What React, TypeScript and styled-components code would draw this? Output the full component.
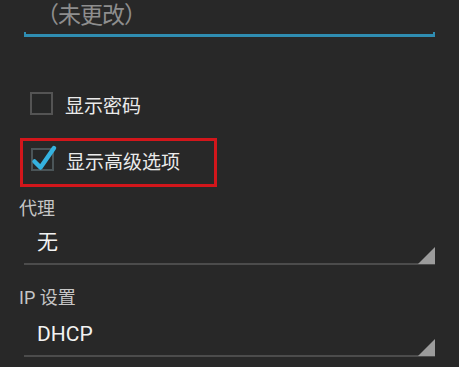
import React from "react";
import styled, { createGlobalStyle } from "styled-components";

const GlobalStyle = createGlobalStyle`
  html, body {
    margin: 0;
    padding: 0;
    background: #282828;
  }
  body {
    width: 459px;
    height: 367px;
    overflow: hidden;
    font-family: Roboto, "Noto Sans CJK SC", sans-serif;
  }
`;

function Checkbox({ checked }: { checked?: boolean }) {
  return (
    <CheckIcon width="24" height="24" viewBox="0 0 24 24">
      <rect
        x="1"
        y="1"
        width="21"
        height="21"
        fill="#262727"
        stroke={checked ? "#4b5558" : "#545454"}
        strokeWidth="2"
      />
      {checked && (
        <path
          d="M3.5 13.5 L9.5 19.5 L23 0"
          fill="none"
          stroke="#35b2df"
          strokeWidth="4.5"
          strokeLinecap="round"
          strokeLinejoin="round"
        />
      )}
    </CheckIcon>
  );
}

function Spinner({ value, offset }: { value: string; offset: number }) {
  return (
    <SpinnerBox>
      <SpinnerValue $offset={offset}>{value}</SpinnerValue>
      <Corner width="17" height="17" viewBox="0 0 17 17">
        <polygon points="0,17 17,17 17,0" fill="#9c9c9c" />
      </Corner>
    </SpinnerBox>
  );
}

export default function App() {
  return (
    <Page>
      <GlobalStyle />
      <EditField>
        <Hint>（未更改）</Hint>
        <Bracket />
      </EditField>

      <CheckRow $top={43}>
        <Checkbox />
        <CheckLabel>显示密码</CheckLabel>
      </CheckRow>

      <Highlight>
        <CheckRow $top={0} $inner>
          <Checkbox checked />
          <CheckLabel>显示高级选项</CheckLabel>
        </CheckRow>
      </Highlight>

      <FieldLabel $top={10}>代理</FieldLabel>
      <Spinner value="无" offset={0} />

      <FieldLabel $top={21}>IP 设置</FieldLabel>
      <Spinner value="DHCP" offset={3} />
    </Page>
  );
}

const Page = styled.div`
  display: flex;
  flex-direction: column;
  width: 459px;
  height: 367px;
`;

const EditField = styled.div`
  display: flex;
  flex-direction: column;
  margin: 0 24px;
`;

const Hint = styled.div`
  height: 32px;
  line-height: 32px;
  padding-left: 12px;
  font-size: 23px;
  color: #8e8e8e;
  letter-spacing: -1px;
`;

const Bracket = styled.div`
  height: 2px;
  border: 2px solid #2f8db2;
  border-top: none;
  border-bottom-width: 3px;
`;

const CheckRow = styled.div<{ $top: number; $inner?: boolean }>`
  display: flex;
  align-items: center;
  gap: 11px;
  height: ${(p) => (p.$inner ? 38 : 48)}px;
  margin-top: ${(p) => p.$top}px;
  padding-left: ${(p) => (p.$inner ? 8 : 30)}px;
  padding-bottom: ${(p) => (p.$inner ? 5 : 0)}px;
`;

const CheckIcon = styled.svg`
  flex-shrink: 0;
  overflow: visible;
`;

const CheckLabel = styled.span`
  font-size: 19px;
  color: #ebebeb;
`;

const Highlight = styled.div`
  width: 191px;
  margin: 10px 0 0 20px;
  border: 3px solid #d2161b;
`;

const FieldLabel = styled.div<{ $top: number }>`
  margin-top: ${(p) => p.$top}px;
  padding-left: 19px;
  height: 24px;
  line-height: 24px;
  font-size: 18px;
  color: #c6c6c6;
`;

const SpinnerBox = styled.div`
  display: flex;
  align-items: flex-end;
  margin: 0 24px;
  border-bottom: 2px solid #4c4c4c;
`;

const SpinnerValue = styled.div<{ $offset: number }>`
  flex: 1;
  height: 42px;
  line-height: 42px;
  padding-top: ${(p) => p.$offset}px;
  padding-left: 13px;
  font-size: 21px;
  color: #f2f2f2;
`;

const Corner = styled.svg`
  flex-shrink: 0;
  margin-bottom: -1px;
`;
